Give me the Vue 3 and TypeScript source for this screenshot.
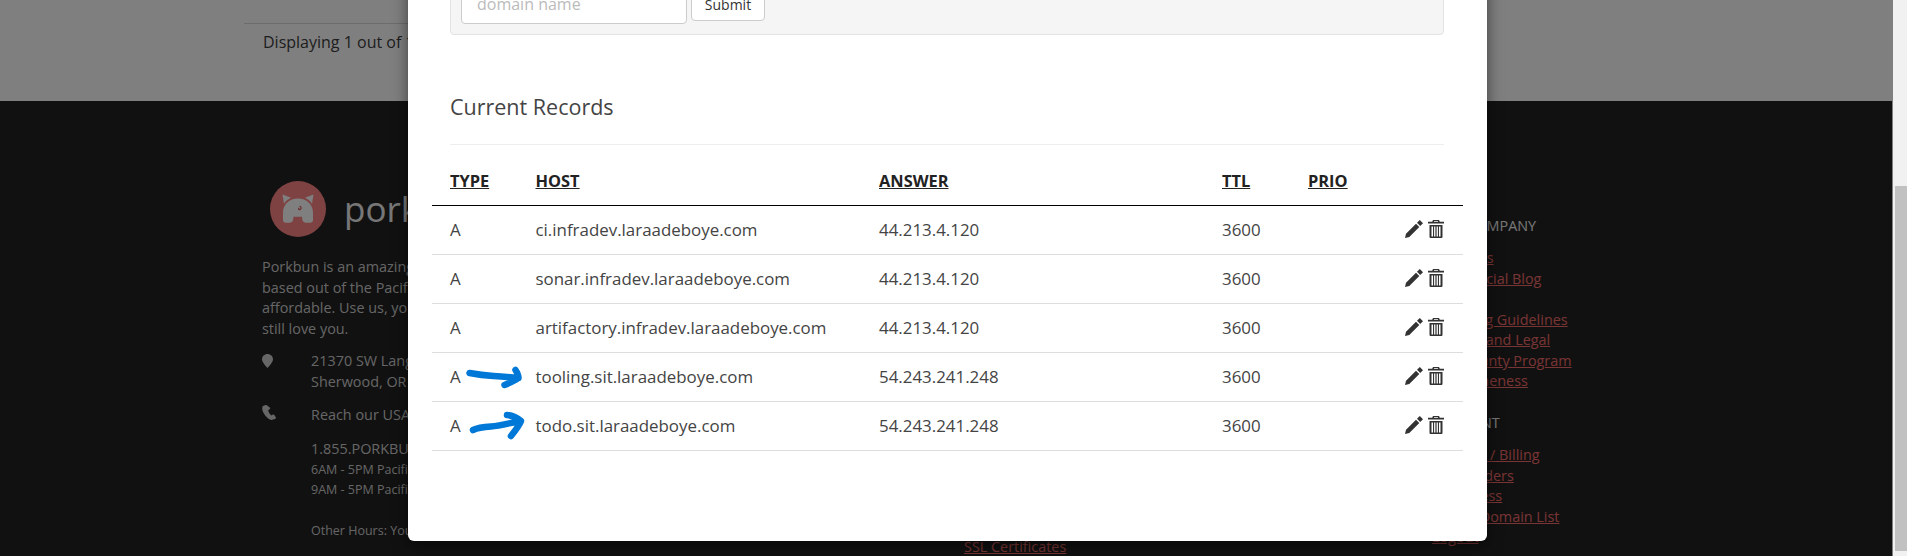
<script setup lang="ts">
interface DnsRecord {
  type: string
  host: string
  answer: string
  ttl: number
  arrow?: 'flat' | 'rising'
}

const records: DnsRecord[] = [
  { type: 'A', host: 'ci.infradev.laraadeboye.com', answer: '44.213.4.120', ttl: 3600 },
  { type: 'A', host: 'sonar.infradev.laraadeboye.com', answer: '44.213.4.120', ttl: 3600 },
  { type: 'A', host: 'artifactory.infradev.laraadeboye.com', answer: '44.213.4.120', ttl: 3600 },
  { type: 'A', host: 'tooling.sit.laraadeboye.com', answer: '54.243.241.248', ttl: 3600, arrow: 'flat' },
  { type: 'A', host: 'todo.sit.laraadeboye.com', answer: '54.243.241.248', ttl: 3600, arrow: 'rising' },
]

const companyLinks = [
  'About Us',
  'Our Official Blog',
  'Pigs',
  'Branding Guidelines',
  'Policies and Legal',
  'Bug Bounty Program',
  'Awesomeness',
]
const accountLinks = ['Account / Billing', 'Your Orders', 'API Access', 'Export Domain List', 'Logout']
</script>

<template>
  <div class="shell">
    <div class="page">
      <section class="content">
        <div class="pager">Displaying 1 out of 1 domains</div>
      </section>

      <footer class="site-footer">
        <div class="about">
          <div class="brand">
            <svg class="logo" viewBox="0 0 56 56">
              <circle cx="28" cy="28" r="28" fill="#ff8585" />
              <path fill="#fff" d="M12.500 13.500l8.500 3.200c-3 1.400-5.300 3.300-7 6z" />
              <path fill="#fff" d="M43.500 13.500l-8.500 3.200c3 1.400 5.300 3.300 7 6z" />
              <path
                fill="#fff"
                d="M28 17.500c8.500 0 15 6 15 14v7.500c0 1.800-1.200 2.800-3 2.800h-4c-2 0-3.500-1.200-3.700-3.200l-.3-2.900H23.500l-.3 2.900c-.2 2-1.700 3.200-3.700 3.200h-3.500c-1.800 0-3-1-3-2.800v-7.500c0-8 6.500-14 15-14z"
              />
              <path fill="none" stroke="#d55" stroke-width="1.200" d="M29.500 25c1.800.8 2.200 2.600.6 3.500-1.400.6-2-.9-.8-1.400" />
            </svg>
            <span class="brand-name">porkbun</span>
          </div>
          <p class="blurb">
            Porkbun is an amazingly awesome ICANN accredited domain name registrar<br />
            based out of the Pacific Northwest. We make domain names simple and<br />
            affordable. Use us, you might even like it, and if you do not we will<br />
            still love you.
          </p>
          <div class="contact address">
            <svg class="contact-icon" viewBox="0 0 11 14" width="11" height="14">
              <path fill="#ccc" d="M5.500 0C2.400 0 0 2.300 0 5.200c0 2.900 3.800 6.900 5.500 8.800C7.200 12.100 11 8.100 11 5.200 11 2.300 8.600 0 5.500 0z" />
            </svg>
            <div>21370 SW Langer Farms Pkwy<br />Sherwood, OR 97140</div>
          </div>
          <div class="contact phone">
            <svg class="contact-icon" viewBox="0 0 14 15" width="14" height="15">
              <path fill="#ccc" d="M3.600 0L.9.900C-.4 2.600.2 5.700 2 8.800c1.900 3.200 4.500 5.700 7.400 6.200l3.600-.9c.7-.3 1.200-1 .9-1.600l-1.500-2.500c-.4-.5-1-.7-1.600-.4l-1.500.8c-1.500-.9-3-3.500-3.100-5.300l1.400-.8c.5-.4.7-1 .5-1.500L5.100.6C4.800.1 4.200-.1 3.600 0z" />
            </svg>
            <div>
              <div class="reach">Reach our USA based support team</div>
              <div>1.855.PORKBUN</div>
              <div class="hours">6AM - 5PM Pacific, Monday - Friday</div>
              <div class="hours">9AM - 5PM Pacific, Saturday - Sunday</div>
              <div class="other-hours">Other Hours: You can leave us a message</div>
            </div>
          </div>
        </div>

        <div class="products">
          <a class="foot-link">SSL Certificates</a>
        </div>

        <div class="links">
          <h4>OUR COMPANY</h4>
          <a v-for="link in companyLinks" :key="link" class="foot-link">{{ link }}</a>
          <h4 class="second">ACCOUNT</h4>
          <a v-for="link in accountLinks" :key="link" class="foot-link">{{ link }}</a>
        </div>
      </footer>

      <!-- dimmed backdrop + open modal -->
      <div class="backdrop"></div>
      <div class="modal">
        <form class="well" @submit.prevent>
          <input class="domain-input" type="text" placeholder="domain name" />
          <button class="submit-btn" type="submit">Submit</button>
        </form>

        <h3 class="records-title">Current Records</h3>

        <table class="records">
          <colgroup>
            <col class="col-type" />
            <col class="col-host" />
            <col class="col-answer" />
            <col class="col-ttl" />
            <col />
            <col class="col-actions" />
          </colgroup>
          <thead>
            <tr>
              <th>TYPE</th>
              <th>HOST</th>
              <th>ANSWER</th>
              <th>TTL</th>
              <th>PRIO</th>
              <th></th>
            </tr>
          </thead>
          <tbody>
            <tr v-for="rec in records" :key="rec.host">
              <td class="type-cell">
                {{ rec.type }}
                <!-- hand drawn annotations on the screenshot -->
                <svg v-if="rec.arrow === 'flat'" class="arrow" viewBox="0 0 60 30" width="60" height="30">
                  <path
                    fill="none"
                    stroke="#0078d7"
                    stroke-width="6.500"
                    stroke-linecap="round"
                    stroke-linejoin="round"
                    d="M3.500 10c8 1.500 16 2.500 24 3 8 .5 14 1 25 2M49.500 7c2 3 3 5 3 8-4 3-9 5-14 7"
                  />
                </svg>
                <svg v-if="rec.arrow === 'rising'" class="arrow" viewBox="0 0 60 30" width="60" height="30">
                  <path
                    fill="none"
                    stroke="#0078d7"
                    stroke-width="6.500"
                    stroke-linecap="round"
                    stroke-linejoin="round"
                    d="M7 18c4-2 10-3 18-3.500 9-.5 17-3 29-5.500M41 3c5 .5 10 2.500 14 6-2 5-6 10-10 15"
                  />
                </svg>
              </td>
              <td>{{ rec.host }}</td>
              <td>{{ rec.answer }}</td>
              <td>{{ rec.ttl }}</td>
              <td></td>
              <td>
                <div class="actions">
                  <svg viewBox="0 0 18 18" width="18" height="18">
                    <path
                      fill="#333"
                      d="M0 18l1-4.300L11 3.700l3.300 3.300L4.300 17zM12 2.800l2-2 .8-.8 3.200 3.200-2.800 2.800z"
                    />
                  </svg>
                  <svg viewBox="0 0 16 18" width="16" height="18">
                    <path
                      fill="#333"
                      fill-rule="evenodd"
                      d="M5 0h6l.8 1.800H16v1.700H0V1.800h4.200zM6 1v.8h4V1zM1.500 5h13v11.500c0 1-.5 1.500-1.500 1.500H3c-1 0-1.500-.5-1.500-1.500zM3.500 6.500v10h1.500v-10zM6.100 6.500v10h1.300v-10zM8.600 6.500v10h1.300v-10zM11 6.500v10h1.500v-10z"
                    />
                  </svg>
                </div>
              </td>
            </tr>
          </tbody>
        </table>
      </div>
    </div>

    <div class="scrollbar"><div class="thumb"></div></div>
  </div>
</template>

<style>
html,
body {
  overflow: hidden;
}
</style>

<style scoped>
.shell {
  display: flex;
  width: 100vw;
  height: 100vh;
  overflow: hidden;
  font-family: 'Open Sans', 'Liberation Sans', sans-serif;
  font-size: 16px;
  color: #444;
}

.page {
  position: relative;
  flex: 1;
  min-width: 0;
  overflow: hidden;
  background: #fff;
}

.scrollbar {
  width: 14px;
  flex: none;
  padding: 186px 0 5px 2px;
  box-sizing: border-box;
  background: #f1f1f1;
}

.thumb {
  height: 100%;
  background: #c1c1c1;
}

/* page behind the modal */
.content {
  height: 101px;
  box-sizing: border-box;
  padding: 23px 0 0 244px;
}

.pager {
  width: 1150px;
  padding: 7px 0 0 19px;
  border-top: 1px solid #d8d8d8;
  line-height: 22px;
  color: #3c3c3c;
}

.site-footer {
  display: grid;
  grid-template-columns: 702px 468px 1fr;
  height: 455px;
  margin-right: 1px;
  padding: 80px 0 0 262px;
  box-sizing: border-box;
  background: #222;
  color: #ccc;
  font-size: 14.4px;
  line-height: 20.57px;
}

.brand {
  display: flex;
  align-items: center;
  gap: 18px;
  height: 56px;
  padding-left: 8px;
}

.logo {
  width: 56px;
  height: 56px;
}

.brand-name {
  font-size: 35px;
  font-weight: 400;
  color: #eee;
}

.blurb {
  margin: 20px 0 0;
}

.contact {
  display: flex;
}

.contact-icon {
  flex: none;
  margin-right: 38px;
}

.address {
  margin-top: 12px;
}

.address .contact-icon {
  margin-top: 3px;
}

.phone {
  margin-top: 13px;
}

.phone .contact-icon {
  margin-right: 35px;
}

.reach {
  margin-bottom: 13px;
}

.hours {
  font-size: 12.5px;
}

.other-hours {
  margin-top: 20px;
  font-size: 12.5px;
}

.products {
  padding-top: 356px;
}

.links {
  padding-top: 34.5px;
}

.links h4 {
  margin: 0 0 12px;
  font-size: 14.4px;
  font-weight: 400;
  line-height: 20.57px;
  color: #eee;
}

.links h4.second {
  margin-top: 20.5px;
}

.foot-link {
  display: block;
  width: fit-content;
  color: #f06a6a;
  text-decoration: underline;
}

.backdrop {
  position: absolute;
  inset: 0;
  background: rgba(0, 0, 0, 0.5);
}

/* modal */
.modal {
  position: absolute;
  top: -40px;
  left: 408px;
  width: 1079px;
  box-sizing: border-box;
  padding: 12px 43px 90px 42px;
  background: #fff;
  border-radius: 0 0 6px 6px;
  box-shadow: 0 5px 15px rgba(0, 0, 0, 0.5);
}

.well {
  display: flex;
  align-items: flex-start;
  gap: 4px;
  padding: 11px 10px 10px;
  background: #f5f5f5;
  border: 1px solid #e3e3e3;
  border-radius: 4px;
}

.domain-input {
  width: 226px;
  height: 40px;
  box-sizing: border-box;
  padding: 0 15px;
  border: 1px solid #ccc;
  border-radius: 4px;
  background: #fff;
  font: inherit;
}

.domain-input::placeholder {
  color: #bbb;
  opacity: 1;
}

.submit-btn {
  width: 74px;
  height: 34px;
  margin-top: 3px;
  padding: 0;
  border: 1px solid #ccc;
  border-radius: 4px;
  background: #fff;
  font: inherit;
  font-size: 14px;
  color: #333;
}

.records-title {
  margin: 57px 0 0;
  padding-bottom: 22px;
  border-bottom: 1px solid #eee;
  font-size: 21.5px;
  font-weight: 400;
  line-height: 30px;
  color: #444;
}

.records {
  width: 1031px;
  margin-left: -18px;
  border-collapse: separate;
  border-spacing: 0;
  table-layout: fixed;
  font-size: 16.9px;
}

.col-type {
  width: 85.5px;
}

.col-host {
  width: 343.5px;
}

.col-answer {
  width: 343px;
}

.col-ttl {
  width: 86px;
}

.col-actions {
  width: 90px;
}

.records th {
  height: 61px;
  box-sizing: border-box;
  padding: 0 0 13px 18px;
  border-bottom: 1px solid #000;
  vertical-align: bottom;
  text-align: left;
  font-size: 16.4px;
  line-height: 22px;
  font-weight: 700;
  color: #222;
  text-decoration: underline;
}

.records td {
  height: 49px;
  box-sizing: border-box;
  padding: 0 0 2px 18px;
  border-bottom: 1px solid #ddd;
  vertical-align: middle;
}

.type-cell {
  position: relative;
}

.arrow {
  position: absolute;
  top: 10px;
  left: 34px;
  overflow: visible;
}

.actions {
  display: flex;
  justify-content: flex-end;
  gap: 5px;
  margin-right: 19px;
}
</style>
